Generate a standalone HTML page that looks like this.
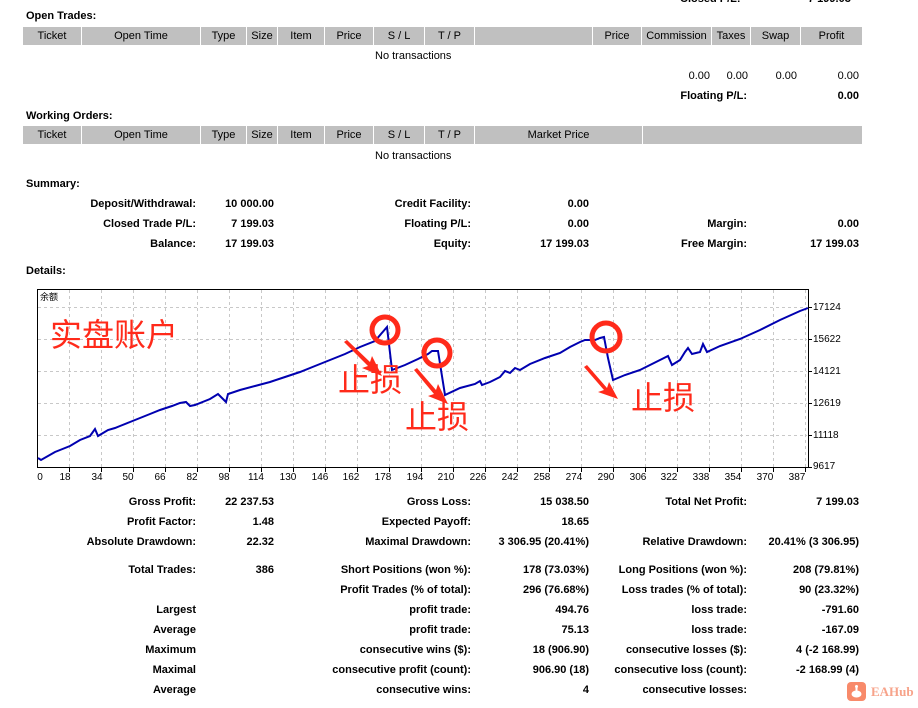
<!DOCTYPE html>
<html><head><meta charset="utf-8"><style>
body{margin:0;width:918px;height:707px;background:#fff;position:relative;overflow:hidden;font-family:"Liberation Sans","Noto Sans CJK SC",sans-serif;font-size:11px;color:#000}
.a{position:absolute;white-space:nowrap}
.b{font-weight:bold}
.r{text-align:right}
.h{position:absolute;background:#c0c0c0;height:18px;line-height:18px;text-align:center;font-size:11px}
.s{position:absolute;left:0;top:1px;width:918px;height:707px}
</style></head><body>
<div class="a b" style="left:680px;top:-7px">Closed P/L:</div>
<div class="a b" style="left:808px;top:-7px">7 199.03</div>
<div class="a b" style="left:26px;top:10px">Open Trades:</div>
<div class="h" style="left:23px;top:27px;width:58px">Ticket</div>
<div class="h" style="left:82px;top:27px;width:118px">Open Time</div>
<div class="h" style="left:201px;top:27px;width:45px">Type</div>
<div class="h" style="left:247px;top:27px;width:30px">Size</div>
<div class="h" style="left:278px;top:27px;width:46px">Item</div>
<div class="h" style="left:325px;top:27px;width:48px">Price</div>
<div class="h" style="left:374px;top:27px;width:50px">S / L</div>
<div class="h" style="left:425px;top:27px;width:49px">T / P</div>
<div class="h" style="left:475px;top:27px;width:117px"></div>
<div class="h" style="left:593px;top:27px;width:48px">Price</div>
<div class="h" style="left:642px;top:27px;width:69px">Commission</div>
<div class="h" style="left:712px;top:27px;width:38px">Taxes</div>
<div class="h" style="left:751px;top:27px;width:49px">Swap</div>
<div class="h" style="left:801px;top:27px;width:61px">Profit</div>
<div class="a" style="left:375px;top:50px">No transactions</div>
<div class="a r" style="left:660px;top:70px;width:50px">0.00</div>
<div class="a r" style="left:700px;top:70px;width:48px">0.00</div>
<div class="a r" style="left:750px;top:70px;width:47px">0.00</div>
<div class="a r" style="left:800px;top:70px;width:59px">0.00</div>
<div class="a b r" style="left:640px;top:90px;width:107px">Floating P/L:</div>
<div class="a b r" style="left:800px;top:90px;width:59px">0.00</div>

<div class="a b" style="left:26px;top:110px">Working Orders:</div>
<div class="h" style="left:23px;top:126px;width:58px">Ticket</div>
<div class="h" style="left:82px;top:126px;width:118px">Open Time</div>
<div class="h" style="left:201px;top:126px;width:45px">Type</div>
<div class="h" style="left:247px;top:126px;width:30px">Size</div>
<div class="h" style="left:278px;top:126px;width:46px">Item</div>
<div class="h" style="left:325px;top:126px;width:48px">Price</div>
<div class="h" style="left:374px;top:126px;width:50px">S / L</div>
<div class="h" style="left:425px;top:126px;width:49px">T / P</div>
<div class="h" style="left:475px;top:126px;width:167px">Market Price</div>
<div class="h" style="left:643px;top:126px;width:219px"></div>
<div class="a" style="left:375px;top:150px">No transactions</div>

<div class="a b" style="left:26px;top:178px">Summary:</div>
<div class="a b r" style="left:40px;top:198px;width:156px">Deposit/Withdrawal:</div>
<div class="a b r" style="left:200px;top:198px;width:74px">10 000.00</div>
<div class="a b r" style="left:300px;top:198px;width:171px">Credit Facility:</div>
<div class="a b r" style="left:480px;top:198px;width:109px">0.00</div>
<div class="a b r" style="left:40px;top:218px;width:156px">Closed Trade P/L:</div>
<div class="a b r" style="left:200px;top:218px;width:74px">7 199.03</div>
<div class="a b r" style="left:300px;top:218px;width:171px">Floating P/L:</div>
<div class="a b r" style="left:480px;top:218px;width:109px">0.00</div>
<div class="a b r" style="left:600px;top:218px;width:147px">Margin:</div>
<div class="a b r" style="left:760px;top:218px;width:99px">0.00</div>
<div class="a b r" style="left:40px;top:238px;width:156px">Balance:</div>
<div class="a b r" style="left:200px;top:238px;width:74px">17 199.03</div>
<div class="a b r" style="left:300px;top:238px;width:171px">Equity:</div>
<div class="a b r" style="left:480px;top:238px;width:109px">17 199.03</div>
<div class="a b r" style="left:600px;top:238px;width:147px">Free Margin:</div>
<div class="a b r" style="left:760px;top:238px;width:99px">17 199.03</div>
<div class="a b" style="left:26px;top:265px">Details:</div>

<svg class="a" style="left:0;top:280px" width="918" height="205" font-family="Liberation Sans, sans-serif" font-size="10">
<g stroke="#c8c8c8" stroke-dasharray="3,3" stroke-width="1">
<line x1="38" x2="807" y1="27.5" y2="27.5"/><line x1="38" x2="807" y1="59.5" y2="59.5"/><line x1="38" x2="807" y1="91.5" y2="91.5"/><line x1="38" x2="807" y1="123.5" y2="123.5"/><line x1="38" x2="807" y1="155.5" y2="155.5"/>
<path d="M69.5 10V187M101.5 10V187M133.5 10V187M165.5 10V187M197.5 10V187M229.5 10V187M261.5 10V187M293.5 10V187M325.5 10V187M357.5 10V187M389.5 10V187M421.5 10V187M453.5 10V187M485.5 10V187M517.5 10V187M549.5 10V187M581.5 10V187M613.5 10V187M645.5 10V187M677.5 10V187M709.5 10V187M741.5 10V187M773.5 10V187M805.5 10V187"/>
</g>
<rect x="37.5" y="9.5" width="771" height="178" fill="none" stroke="#000"/>
<g stroke="#000"><path d="M808 27.5h4M808 59.5h4M808 91.5h4M808 123.5h4M808 155.5h4M808 187.5h4"/>
<path d="M69.5 188v4M101.5 188v4M133.5 188v4M165.5 188v4M197.5 188v4M229.5 188v4M261.5 188v4M293.5 188v4M325.5 188v4M357.5 188v4M389.5 188v4M421.5 188v4M453.5 188v4M485.5 188v4M517.5 188v4M549.5 188v4M581.5 188v4M613.5 188v4M645.5 188v4M677.5 188v4M709.5 188v4M741.5 188v4M773.5 188v4M805.5 188v4"/></g>
<text x="40" y="20" font-size="9">余额</text>
<g font-size="10"><text x="813" y="30">17124</text><text x="813" y="62">15622</text><text x="813" y="94">14121</text><text x="813" y="126">12619</text><text x="813" y="158">11118</text><text x="813" y="189">9617</text></g>
<g font-size="10" text-anchor="middle"><text x="40" y="200">0</text><text x="65" y="200">18</text><text x="97" y="200">34</text><text x="128" y="200">50</text><text x="160" y="200">66</text><text x="192" y="200">82</text><text x="224" y="200">98</text><text x="256" y="200">114</text><text x="288" y="200">130</text><text x="320" y="200">146</text><text x="351" y="200">162</text><text x="383" y="200">178</text><text x="415" y="200">194</text><text x="446" y="200">210</text><text x="478" y="200">226</text><text x="510" y="200">242</text><text x="542" y="200">258</text><text x="574" y="200">274</text><text x="606" y="200">290</text><text x="638" y="200">306</text><text x="669" y="200">322</text><text x="701" y="200">338</text><text x="733" y="200">354</text><text x="765" y="200">370</text><text x="797" y="200">387</text></g>
<polyline fill="none" stroke="#0000b0" stroke-width="2" points="38,178 41,180 55,172 60,170 70,166 80,160 90,156 95,149 98,156 108,150 115,148 120,146 130,142 140,138 150,134 160,130 172,126 180,123 186,122 190,126 195,125 210,119 218,114 222,118 226,122 228,114 240,110 255,106 270,102 285,97 300,92 315,86 330,80 345,74 360,67 375,61 387,47 392,90 405,85 418,79 428,74 432,71 438,71 445,115 460,108 475,104 480,101 482,105 490,102 500,97 505,91 510,93 515,88 520,90 530,84 545,78 560,73 570,67 580,62 585,60 595,60 600,58 604,57 608,78 613,100 625,95 640,90 652,84 660,80 668,76 672,85 680,80 685,72 688,68 692,74 700,72 703,64 707,72 720,66 740,59 760,50 780,40 800,31 808,28"/>
<g fill="none" stroke="#ff2a1a" stroke-width="5"><circle cx="385" cy="50" r="13"/><circle cx="437" cy="73" r="13"/><circle cx="606" cy="57" r="14"/></g>
<g fill="#ff2a1a">
<polygon points="344,62 347,60 370,82 372,76 382,96 362,88 368,86"/>
<polygon points="414,90 417,88 436,110 438,104 448,124 428,116 434,114"/>
<polygon points="584,87 587,85 607,108 609,102 618,119 598,112 604,110"/>
</g>
<g fill="#ff2a1a" font-family="Noto Sans CJK SC, sans-serif"><text x="50" y="66" font-size="32">实盘账户</text>
<text x="338" y="111" font-size="32">止损</text><text x="405" y="148" font-size="32">止损</text><text x="631" y="129" font-size="32">止损</text></g>
</svg>

<div class="s">
<div class="a b r" style="left:40px;top:495px;width:156px">Gross Profit:</div><div class="a b r" style="left:200px;top:495px;width:74px">22 237.53</div>
<div class="a b r" style="left:280px;top:495px;width:191px">Gross Loss:</div><div class="a b r" style="left:480px;top:495px;width:109px">15 038.50</div>
<div class="a b r" style="left:600px;top:495px;width:147px">Total Net Profit:</div><div class="a b r" style="left:760px;top:495px;width:99px">7 199.03</div>
<div class="a b r" style="left:40px;top:515px;width:156px">Profit Factor:</div><div class="a b r" style="left:200px;top:515px;width:74px">1.48</div>
<div class="a b r" style="left:280px;top:515px;width:191px">Expected Payoff:</div><div class="a b r" style="left:480px;top:515px;width:109px">18.65</div>
<div class="a b r" style="left:40px;top:535px;width:156px">Absolute Drawdown:</div><div class="a b r" style="left:200px;top:535px;width:74px">22.32</div>
<div class="a b r" style="left:280px;top:535px;width:191px">Maximal Drawdown:</div><div class="a b r" style="left:480px;top:535px;width:109px">3 306.95 (20.41%)</div>
<div class="a b r" style="left:600px;top:535px;width:147px">Relative Drawdown:</div><div class="a b r" style="left:740px;top:535px;width:119px">20.41% (3 306.95)</div>
<div class="a b r" style="left:40px;top:563px;width:156px">Total Trades:</div><div class="a b r" style="left:200px;top:563px;width:74px">386</div>
<div class="a b r" style="left:280px;top:563px;width:191px">Short Positions (won %):</div><div class="a b r" style="left:480px;top:563px;width:109px">178 (73.03%)</div>
<div class="a b r" style="left:580px;top:563px;width:167px">Long Positions (won %):</div><div class="a b r" style="left:760px;top:563px;width:99px">208 (79.81%)</div>
<div class="a b r" style="left:280px;top:583px;width:191px">Profit Trades (% of total):</div><div class="a b r" style="left:480px;top:583px;width:109px">296 (76.68%)</div>
<div class="a b r" style="left:580px;top:583px;width:167px">Loss trades (% of total):</div><div class="a b r" style="left:760px;top:583px;width:99px">90 (23.32%)</div>
<div class="a b r" style="left:40px;top:603px;width:156px">Largest</div>
<div class="a b r" style="left:280px;top:603px;width:191px">profit trade:</div><div class="a b r" style="left:480px;top:603px;width:109px">494.76</div>
<div class="a b r" style="left:580px;top:603px;width:167px">loss trade:</div><div class="a b r" style="left:760px;top:603px;width:99px">-791.60</div>
<div class="a b r" style="left:40px;top:623px;width:156px">Average</div>
<div class="a b r" style="left:280px;top:623px;width:191px">profit trade:</div><div class="a b r" style="left:480px;top:623px;width:109px">75.13</div>
<div class="a b r" style="left:580px;top:623px;width:167px">loss trade:</div><div class="a b r" style="left:760px;top:623px;width:99px">-167.09</div>
<div class="a b r" style="left:40px;top:643px;width:156px">Maximum</div>
<div class="a b r" style="left:280px;top:643px;width:191px">consecutive wins ($):</div><div class="a b r" style="left:480px;top:643px;width:109px">18 (906.90)</div>
<div class="a b r" style="left:580px;top:643px;width:167px">consecutive losses ($):</div><div class="a b r" style="left:760px;top:643px;width:99px">4 (-2 168.99)</div>
<div class="a b r" style="left:40px;top:663px;width:156px">Maximal</div>
<div class="a b r" style="left:280px;top:663px;width:191px">consecutive profit (count):</div><div class="a b r" style="left:480px;top:663px;width:109px">906.90 (18)</div>
<div class="a b r" style="left:580px;top:663px;width:167px">consecutive loss (count):</div><div class="a b r" style="left:760px;top:663px;width:99px">-2 168.99 (4)</div>
<div class="a b r" style="left:40px;top:683px;width:156px">Average</div>
<div class="a b r" style="left:280px;top:683px;width:191px">consecutive wins:</div><div class="a b r" style="left:480px;top:683px;width:109px">4</div>
<div class="a b r" style="left:580px;top:683px;width:167px">consecutive losses:</div>
</div>

<div class="a" style="left:847px;top:682px;width:19px;height:19px;background:#f88a6a;border-radius:4px"></div>
<svg class="a" style="left:847px;top:682px" width="19" height="19"><ellipse cx="9.5" cy="12" rx="5" ry="3.5" fill="#fff"/><rect x="8.5" y="4" width="2" height="6" fill="#fff"/><circle cx="9.5" cy="4.5" r="1.5" fill="#fff"/></svg>
<div class="a b" style="left:871px;top:684px;color:#f7a38a;font-family:'Liberation Serif',serif;font-size:13px">EAHub</div>
</body></html>
